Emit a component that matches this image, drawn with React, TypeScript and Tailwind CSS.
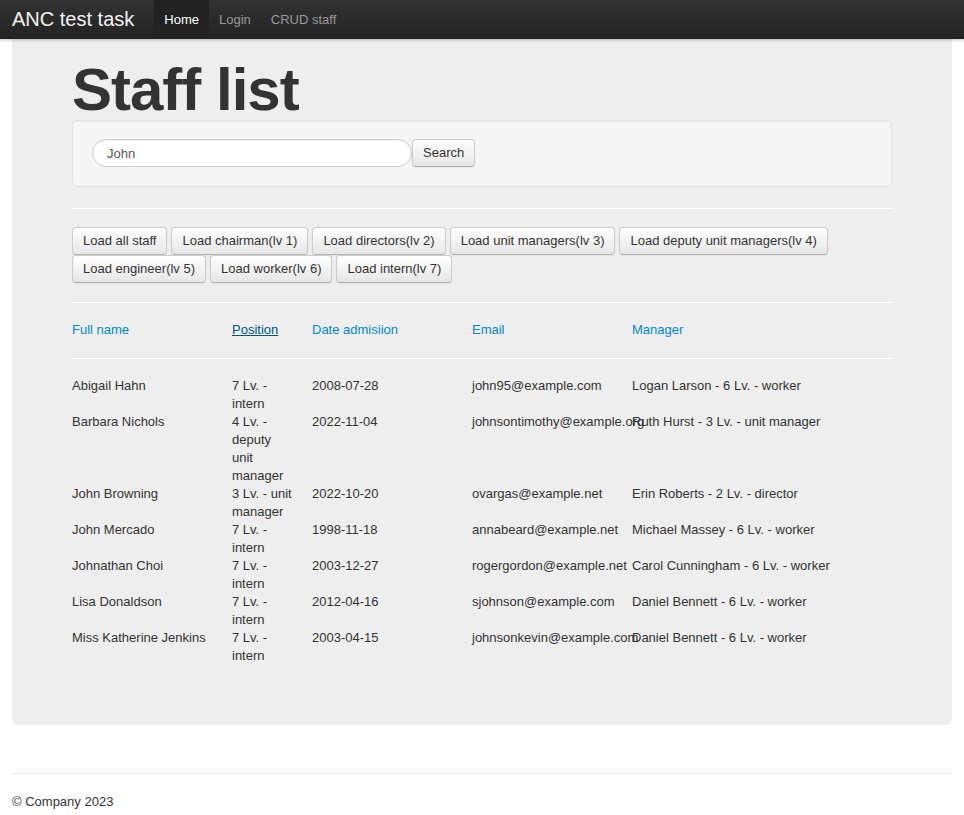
import React from 'react';

type Staff = {
  name: string;
  position: string;
  date: string;
  email: string;
  manager: string;
};

const staff: Staff[] = [
  { name: 'Abigail Hahn', position: '7 Lv. - intern', date: '2008-07-28', email: 'john95@example.com', manager: 'Logan Larson - 6 Lv. - worker' },
  { name: 'Barbara Nichols', position: '4 Lv. - deputy unit manager', date: '2022-11-04', email: 'johnsontimothy@example.org', manager: 'Ruth Hurst - 3 Lv. - unit manager' },
  { name: 'John Browning', position: '3 Lv. - unit manager', date: '2022-10-20', email: 'ovargas@example.net', manager: 'Erin Roberts - 2 Lv. - director' },
  { name: 'John Mercado', position: '7 Lv. - intern', date: '1998-11-18', email: 'annabeard@example.net', manager: 'Michael Massey - 6 Lv. - worker' },
  { name: 'Johnathan Choi', position: '7 Lv. - intern', date: '2003-12-27', email: 'rogergordon@example.net', manager: 'Carol Cunningham - 6 Lv. - worker' },
  { name: 'Lisa Donaldson', position: '7 Lv. - intern', date: '2012-04-16', email: 'sjohnson@example.com', manager: 'Daniel Bennett - 6 Lv. - worker' },
  { name: 'Miss Katherine Jenkins', position: '7 Lv. - intern', date: '2003-04-15', email: 'johnsonkevin@example.com', manager: 'Daniel Bennett - 6 Lv. - worker' },
];

const loaders = [
  'Load all staff',
  'Load chairman(lv 1)',
  'Load directors(lv 2)',
  'Load unit managers(lv 3)',
  'Load deputy unit managers(lv 4)',
  'Load engineer(lv 5)',
  'Load worker(lv 6)',
  'Load intern(lv 7)',
];

const btn =
  'h-[28px] px-[10px] text-[13px] leading-[18px] text-[#333] bg-gradient-to-b from-white to-[#e6e6e6] border border-[#ccc] border-b-[#b3b3b3] rounded-[4px] shadow-[inset_0_1px_0_rgba(255,255,255,0.2),0_1px_2px_rgba(0,0,0,0.05)] whitespace-nowrap';

const Hr = ({ className = '' }: { className?: string }) => (
  <div className={`h-[2px] border-t border-t-[#eee] border-b border-b-white ${className}`} />
);

export default function App() {
  return (
    <div className="min-h-[815px] bg-white text-[13px] leading-[18px] text-[#333] font-['Liberation_Sans',Arial,sans-serif]">
      <div className="relative z-10 h-[39px] bg-gradient-to-b from-[#333] to-[#222] shadow-[0_1px_3px_rgba(0,0,0,0.25)]">
        <div className="w-[940px] mx-auto flex items-stretch h-full">
          <span className="text-[20px] leading-[39px] text-[#f2f2f2] pr-[20px]">ANC test task</span>
          <nav className="flex">
            <a className="px-[10px] leading-[39px] bg-[#222] text-white">Home</a>
            <a className="px-[10px] leading-[39px] text-[#999]">Login</a>
            <a className="px-[10px] leading-[39px] text-[#999]">CRUD staff</a>
          </nav>
        </div>
      </div>

      <div className="w-[940px] mx-auto">
        <div className="bg-[#eee] rounded-b-[6px] px-[60px] pt-[21px] pb-[60px]">
          <h1 className="text-[60px] leading-[60px] tracking-[-1px] font-bold text-[#333]">Staff list</h1>

          <div className="bg-[#f5f5f5] border border-[#e3e3e3] rounded-[4px] shadow-[inset_0_1px_1px_rgba(0,0,0,0.05)] px-[19px] pt-[18px] pb-[19px] flex items-center">
            <input
              defaultValue="John"
              className="w-[320px] h-[28px] px-[14px] rounded-full border border-[#ccc] bg-white text-[13px] text-[#555] shadow-[inset_0_1px_1px_rgba(0,0,0,0.075)] outline-none"
            />
            <button className={btn}>Search</button>
          </div>

          <Hr className="mt-[20px] mb-[18px]" />

          <div className="flex flex-wrap gap-x-[4px]">
            {loaders.map(l => (
              <button key={l} className={btn}>
                {l}
              </button>
            ))}
          </div>

          <Hr className="mt-[18px] mb-[18px]" />

          <div className="flex">
            <a className="w-[140px] mr-[20px] shrink-0 text-[#0088cc]">Full name</a>
            <a className="w-[60px] mr-[20px] shrink-0 text-[#005580] underline">Position</a>
            <a className="w-[140px] mr-[20px] shrink-0 text-[#0088cc]">Date admisiion</a>
            <a className="w-[140px] mr-[20px] shrink-0 text-[#0088cc]">Email</a>
            <a className="flex-1 text-[#0088cc]">Manager</a>
          </div>

          <Hr className="mt-[18px] mb-[18px]" />

          <div>
            {staff.map(s => (
              <div key={s.name} className="flex">
                <div className="w-[140px] mr-[20px] shrink-0">{s.name}</div>
                <div className="w-[60px] mr-[20px] shrink-0">{s.position}</div>
                <div className="w-[140px] mr-[20px] shrink-0">{s.date}</div>
                <div className="w-[140px] mr-[20px] shrink-0 whitespace-nowrap">{s.email}</div>
                <div className="flex-1">{s.manager}</div>
              </div>
            ))}
          </div>
        </div>

        <Hr className="mt-[48px] mb-[18px]" />
        <footer>
          <p>© Company 2023</p>
        </footer>
      </div>
    </div>
  );
}
